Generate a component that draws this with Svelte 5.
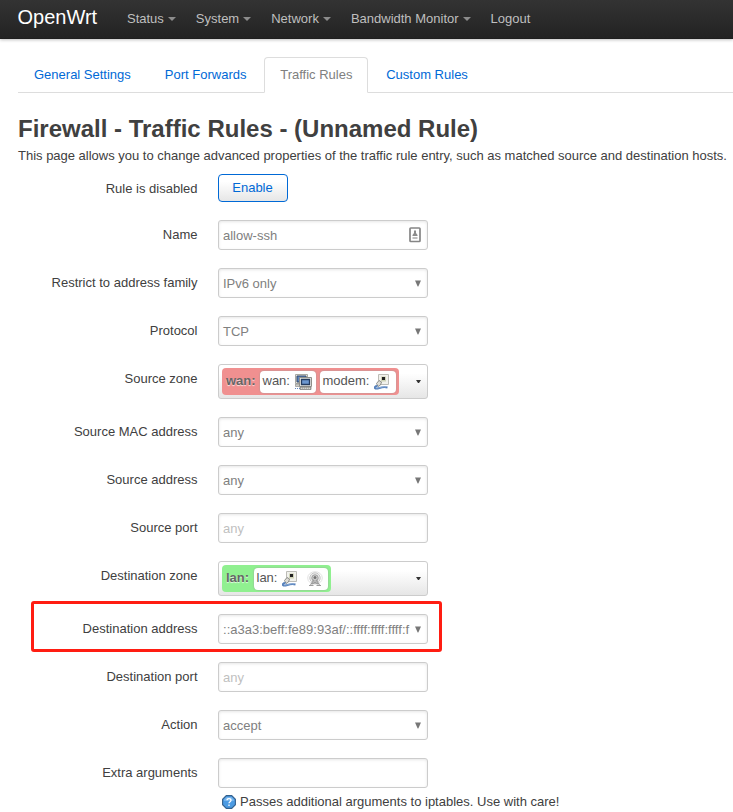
<script>
  const menu = [
    { label: 'Status', drop: true },
    { label: 'System', drop: true },
    { label: 'Network', drop: true },
    { label: 'Bandwidth Monitor', drop: true },
    { label: 'Logout', drop: false }
  ];
  const tabs = ['General Settings', 'Port Forwards', 'Traffic Rules', 'Custom Rules'];
  const active = 'Traffic Rules';
  const rows = [
    { label: 'Rule is disabled', type: 'button', value: 'Enable' },
    { label: 'Name', type: 'text', value: 'allow-ssh', contact: true },
    { label: 'Restrict to address family', type: 'select', value: 'IPv6 only' },
    { label: 'Protocol', type: 'select', value: 'TCP' },
    { label: 'Source zone', type: 'zone', zone: 'wan', nets: [{ name: 'wan', icons: ['bridge'] }, { name: 'modem', icons: ['port'] }] },
    { label: 'Source MAC address', type: 'select', value: 'any' },
    { label: 'Source address', type: 'select', value: 'any' },
    { label: 'Source port', type: 'text', value: '', placeholder: 'any' },
    { label: 'Destination zone', type: 'zone', zone: 'lan', nets: [{ name: 'lan', icons: ['port', 'wifi'] }] },
    { label: 'Destination address', type: 'select', value: '::a3a3:beff:fe89:93af/::ffff:ffff:ffff:f', marked: true },
    { label: 'Destination port', type: 'text', value: '', placeholder: 'any' },
    { label: 'Action', type: 'select', value: 'accept' },
    { label: 'Extra arguments', type: 'text', value: '', help: 'Passes additional arguments to iptables. Use with care!' }
  ];
</script>

{#snippet icon(kind)}
  {#if kind === 'bridge'}
    <svg class="icon" width="17" height="16" viewBox="0 0 17 16">
      <path d="M.5.500h12v9H.5z" fill="#e4e4de" stroke="#a8a8a2" />
      <path d="M2 2h9v6H2z" fill="#5b85bf" stroke="#33496a" />
      <path d="M.5 10h5v2.500h-5z" fill="#c9c9c2" stroke="#909090" stroke-width=".7" />
      <path d="M4.500 3.500h12v9h-12z" fill="#e8e8e3" stroke="#8f8f8a" />
      <path d="M6.500 5.500h8v5h-8z" fill="#6d97cf" stroke="#263d61" stroke-width="1.300" />
      <path d="M5 13h11v2.500H5z" fill="#b5b5ad" stroke="#777" stroke-width=".7" />
      <path d="M6 14.300h9" stroke="#ddd" stroke-dasharray="1 1" />
      <path d="M0 14.500h5" stroke="#6489bd" stroke-dasharray="1 1" />
    </svg>
  {:else if kind === 'port'}
    <svg class="icon" width="16" height="16" viewBox="0 0 16 16">
      <path d="M4.500.500h10v10h-10z" fill="#f1f1ec" stroke="#bcbcb6" />
      <path d="M7 2.500h5v5H7z" fill="#cfd3b6" />
      <path d="M8 3h3v3H8z" fill="#222" />
      <path d="M2.500 9.500l2.500-3 2.500 1.500-1 3-2.500 1.500z" fill="#deded8" stroke="#858580" stroke-width=".9" />
      <path d="M3.500 12C1 12-.3 14 1.500 14.500c3 .7 6-2.500 12-1" fill="none" stroke="#5680ba" stroke-width="1.900" />
      <path d="M2 14c4 .5 6-2 10-1" fill="none" stroke="#94b3dc" stroke-width=".7" />
    </svg>
  {:else}
    <svg class="icon" width="16" height="16" viewBox="0 0 16 16" fill="none">
      <ellipse cx="8" cy="7" rx="7.300" ry="6.300" stroke="#e2e2e2" />
      <circle cx="8" cy="7" r="5.200" fill="#ececec" stroke="#c6c6c6" />
      <circle cx="8" cy="7" r="3.200" fill="#d5d5d5" stroke="#9c9c9c" />
      <circle cx="8" cy="6.500" r="1.500" fill="#747474" />
      <path d="M7 8.500L3.500 14M9 8.500l3.500 5.500M5.500 10.500l5.500 2.500M10.500 10.500L5 13M2 14.500h4.500M9.500 14.500H14" stroke="#9c9c9c" stroke-width="1.100" />
    </svg>
  {/if}
{/snippet}

<div class="page">
  <header>
    <a class="brand" href="#top">OpenWrt</a>
    <nav>
      {#each menu as item}
        <a href="#menu">{item.label}{#if item.drop}<i class="caret"></i>{/if}</a>
      {/each}
    </nav>
  </header>

  <main>
    <ul class="tabs">
      {#each tabs as tab}
        <li class:active={tab === active}><a href="#tab">{tab}</a></li>
      {/each}
    </ul>

    <h2>Firewall - Traffic Rules - (Unnamed Rule)</h2>
    <p class="intro">This page allows you to change advanced properties of the traffic rule entry, such as matched source and destination hosts.</p>

    <form>
      {#each rows as row}
        <div class="row" class:marked={row.marked}>
          <span class="label">{row.label}</span>
          <div class="field">
            {#if row.type === 'button'}
              <button type="button">{row.value}</button>
            {:else if row.type === 'text'}
              <div class="control">
                <input type="text" value={row.value} placeholder={row.placeholder} aria-label={row.label} />
                {#if row.contact}
                  <svg class="contact" width="12" height="16" viewBox="0 0 12 16">
                    <rect x="1" y="1" width="10" height="13.500" rx=".8" fill="#fff" stroke="#858585" stroke-width="1.700" />
                    <path d="M5 3.500h2v2.500l1.500 2v1h-5V8L5 6z" fill="#8c8c8c" />
                    <path d="M3.500 11h5" stroke="#aaa" stroke-width="1.500" />
                  </svg>
                {/if}
              </div>
            {:else if row.type === 'select'}
              <div class="control select"><span class="value">{row.value}</span>
                <svg class="arrow" width="6" height="7" viewBox="0 0 6 7"><path d="M0 .5h6L3.300 6.500h-.6z" fill="#777" /></svg>
              </div>
            {:else}
              <div class="zonebox">
                <div class="zone {row.zone}">
                  <b>{row.zone}:</b>
                  {#each row.nets as net}
                    <span class="net {net.name}"><span class="netname">{net.name}:</span>{#each net.icons as kind}{@render icon(kind)}{/each}</span>
                  {/each}
                </div>
                <svg class="open" width="5" height="3" viewBox="0 0 5 3"><path d="M0 0h5L3 3H2z" fill="#333" /></svg>
              </div>
            {/if}
            {#if row.help}
              <div class="help">
                <svg width="14" height="14" viewBox="0 0 14 14">
                  <path d="M4.300.6h5.400l3.700 3.700v5.400l-3.700 3.700H4.300L.6 9.700V4.300z" fill="#4c9be3" stroke="#34618d" stroke-width="1.100" />
                  <path d="M4.500 2h5l2.500 2.500V6H2V4.500z" fill="#8fc5f4" opacity=".6" />
                  <path d="M5 5.300c0-2.300 4-2.300 4 0C9 6.700 7 6.700 7 8.300M7 9.500v1.400" fill="none" stroke="#fff" stroke-width="1.300" />
                </svg>
                <span>{row.help}</span>
              </div>
            {/if}
          </div>
        </div>
      {/each}
    </form>
  </main>
</div>

<style>
  .page {
    height: 812px;
    overflow: hidden;
    background: #fff;
    color: #404040;
    font: 13px/18px "Liberation Sans", Arial, sans-serif;
  }
  a { text-decoration: none; color: #0069d6; }
  header {
    display: flex;
    box-sizing: border-box;
    height: 39px;
    padding-left: 17.500px;
    background: linear-gradient(#333, #222);
    box-shadow: 0 1px 3px rgba(0, 0, 0, .25), inset 0 -1px 0 rgba(0, 0, 0, .1);
  }
  .brand {
    width: 99.500px;
    font-size: 20px;
    line-height: 34px;
    color: #fff;
  }
  nav { display: flex; padding-left: 10px; gap: 20px; }
  nav a {
    display: flex;
    align-items: center;
    height: 37px;
    color: #bfbfbf;
    white-space: nowrap;
  }
  .caret {
    margin: 1px 0 0 4px;
    border: 4px solid transparent;
    border-top-color: #8c8c8c;
    border-bottom: 0;
  }
  main { padding: 18px 0 0 18px; }
  .tabs {
    display: flex;
    gap: 2px;
    margin: 0;
    padding: 0;
    height: 35px;
    border-bottom: 1px solid #ddd;
    list-style: none;
  }
  .tabs li {
    box-sizing: border-box;
    height: 36px;
    padding: 0 15px;
    border: 1px solid transparent;
    border-radius: 4px 4px 0 0;
    line-height: 34px;
    white-space: nowrap;
  }
  .tabs .active { padding: 0 14.800px 0 14.700px; border-color: #ddd; border-bottom-color: #fff; background: #fff; }
  .active a { color: #808080; }
  h2 {
    margin: 18px 0 0;
    font-size: 24px;
    line-height: 36px;
    white-space: nowrap;
  }
  .intro { margin: 0; white-space: nowrap; letter-spacing: -.008px; }
  form { padding-top: 9px; }
  .row { position: relative; display: flex; gap: 20px; margin-bottom: 18px; }
  .label { width: 179.500px; margin-right: .5px; padding-top: 6px; text-align: right; }
  .field { width: 420px; }
  .marked::after {
    content: "";
    position: absolute;
    left: 13px;
    top: -13px;
    box-sizing: border-box;
    width: 411px;
    height: 51px;
    border: 3px solid #ff1d12;
    border-radius: 3px;
  }
  button {
    display: block;
    box-sizing: border-box;
    width: 70px;
    height: 28px;
    padding: 0 1px 1px 0;
    border: 1px solid #0069d6;
    border-radius: 4px;
    background: linear-gradient(#fff 25%, #e6e6e6);
    color: #0069d6;
    font: inherit;
  }
  .control {
    display: flex;
    align-items: center;
    box-sizing: border-box;
    width: 210px;
    height: 30px;
    padding: 0 6px 0 4px;
    border: 1px solid #ccc;
    border-radius: 3px;
    box-shadow: inset 0 1px 3px rgba(0, 0, 0, .1);
    color: #808080;
  }
  input {
    flex: 1;
    min-width: 0;
    padding: 1px 0 0;
    border: 0;
    outline: 0;
    background: none;
    color: #808080;
    font: inherit;
  }
  input::placeholder { color: #bfbfbf; opacity: 1; }
  .contact { flex: none; }
  .value {
    flex: none;
    width: 187px;
    padding-top: 2px;
    white-space: nowrap;
  }
  .marked .value { letter-spacing: .015px; }
  .select { padding-right: 5px; }
  .arrow { margin-left: 5px; flex: none; }
  .zonebox {
    display: flex;
    align-items: center;
    justify-content: space-between;
    box-sizing: border-box;
    width: 210px;
    height: 35px;
    padding: 0 6px 0 3px;
    border: 1px solid #ccc;
    border-radius: 3px;
    background: linear-gradient(#fff 25%, #e6e6e6);
  }
  .zone {
    display: flex;
    align-items: center;
    box-sizing: border-box;
    height: 27px;
    padding: 0 3px 0 4px;
    border-radius: 4px;
    color: #555;
    line-height: 16px;
  }
  .zone b { position: relative; top: -1px; flex: none; width: 34px; color: #666; text-shadow: 0 1px 1px rgba(255, 255, 255, .75); }
  .zone.wan { width: 177px; background: #f09090; }
  .zone.lan { width: 109px; background: #90f090; }
  .zone.lan b { width: 28px; }
  .net {
    display: flex;
    align-items: center;
    box-sizing: border-box;
    height: 22px;
    padding: 0 2.500px;
    border-radius: 4px;
    background: #fff;
    box-shadow: 0 0 1px 1px rgba(160, 160, 160, .3);
  }
  .net.wan { width: 56px; margin-right: 4px; }
  .net.modem { width: 76px; }
  .net.lan { width: 74px; }
  .netname { flex: none; margin: 0 5px 2px 0; }
  .icon { flex: none; }
  .icon + .icon { margin-left: 9px; }
  .help { display: flex; align-items: center; gap: 4px; padding: 5px 0 0 4px; white-space: nowrap; }
</style>
